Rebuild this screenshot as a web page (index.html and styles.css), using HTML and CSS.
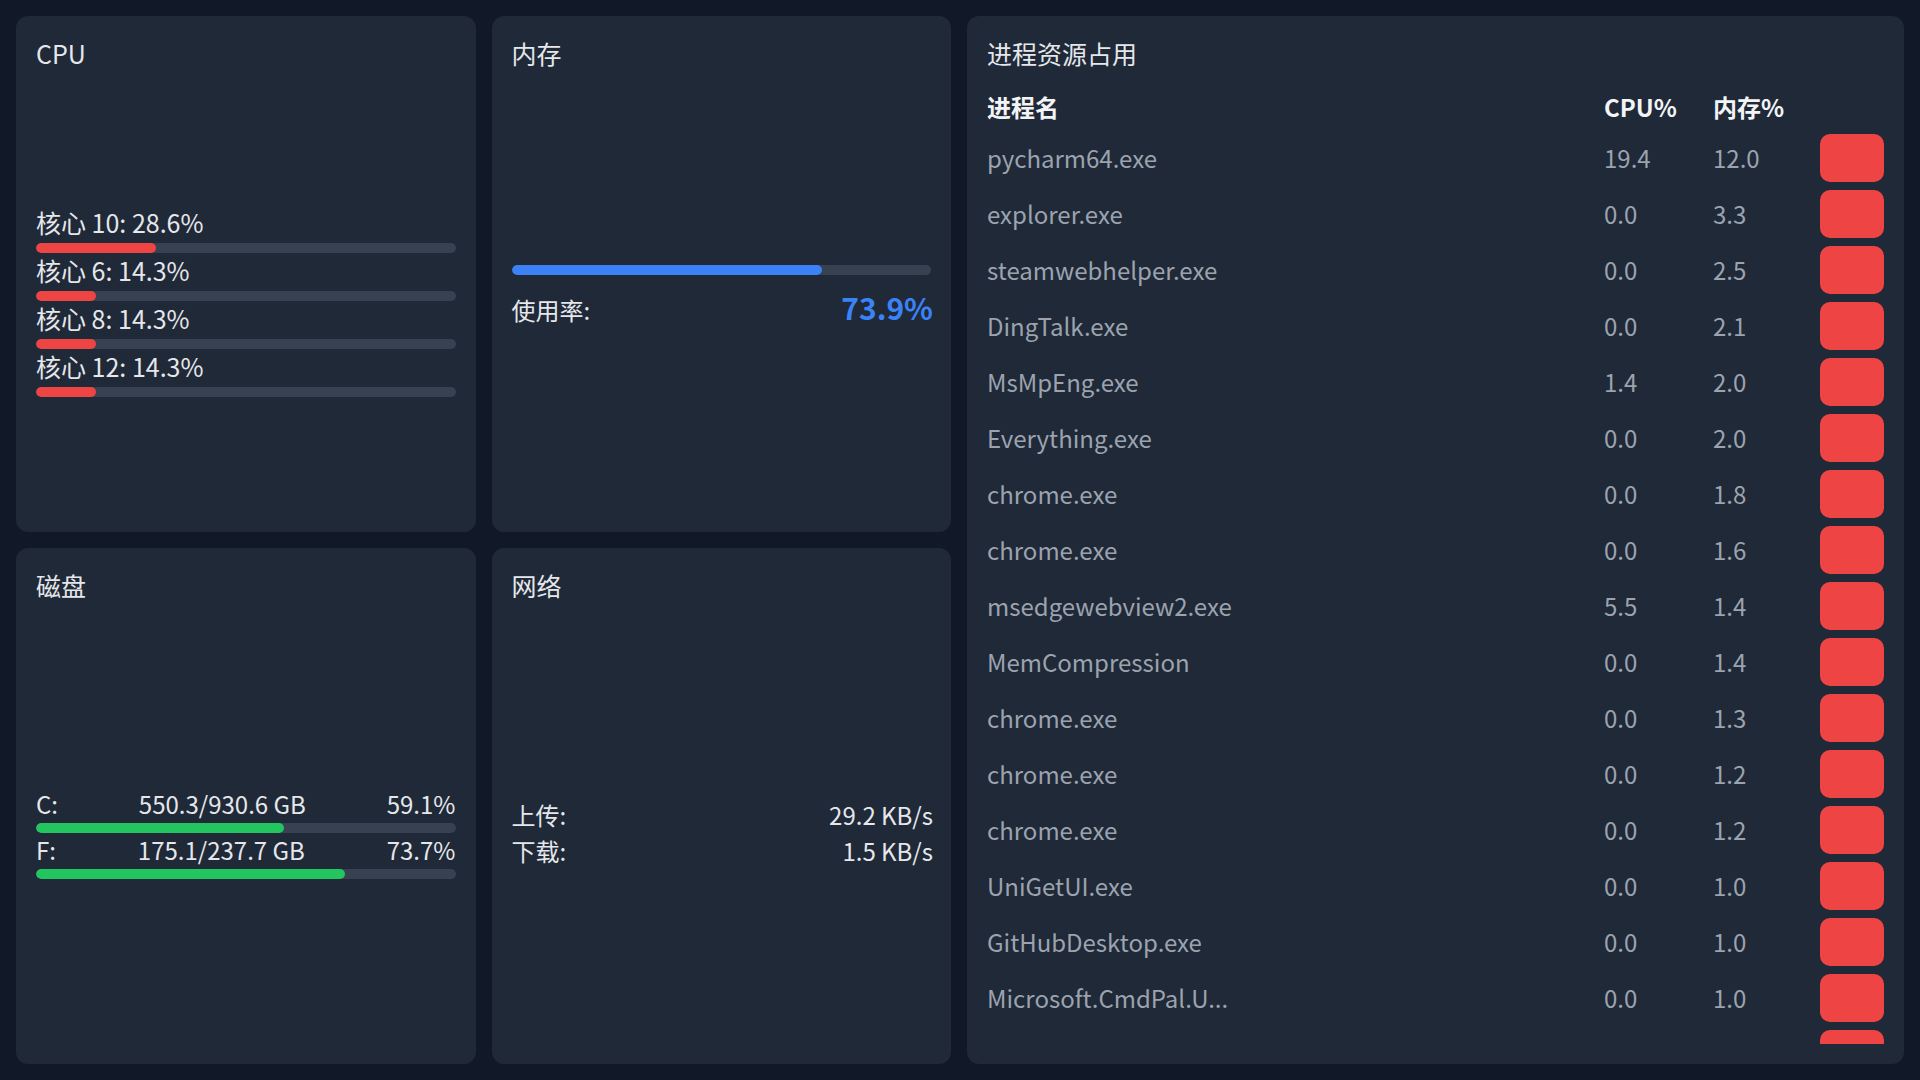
FILE: index.html
```html
<!DOCTYPE html>
<html lang="zh-CN">
<head>
<meta charset="utf-8">
<title>系统监控</title>
<link rel="stylesheet" href="styles.css">
</head>
<body>
<div class="dash">
  <section class="card cpu">
    <div class="title">CPU</div>
    <div class="body">
      <div class="core">
        <div class="label">核心 10: 28.6%</div>
        <div class="bar"><div class="fill red" style="width:28.6%"></div></div>
      </div>
      <div class="core">
        <div class="label">核心 6: 14.3%</div>
        <div class="bar"><div class="fill red" style="width:14.3%"></div></div>
      </div>
      <div class="core">
        <div class="label">核心 8: 14.3%</div>
        <div class="bar"><div class="fill red" style="width:14.3%"></div></div>
      </div>
      <div class="core">
        <div class="label">核心 12: 14.3%</div>
        <div class="bar"><div class="fill red" style="width:14.3%"></div></div>
      </div>
    </div>
  </section>

  <section class="card mem">
    <div class="title">内存</div>
    <div class="body">
      <div class="bar"><div class="fill blue" style="width:73.9%"></div></div>
      <div class="mem-row">
        <span>使用率:</span>
        <span class="big">73.9%</span>
      </div>
    </div>
  </section>

  <section class="card proc">
    <div class="title">进程资源占用</div>
    <div class="table">
      <div class="thead">
        <div>进程名</div><div>CPU%</div><div>内存%</div><div></div>
      </div>
      <div class="rows">
        <div class="tr"><div>pycharm64.exe</div><div>19.4</div><div>12.0</div><div class="kill"></div></div>
        <div class="tr"><div>explorer.exe</div><div>0.0</div><div>3.3</div><div class="kill"></div></div>
        <div class="tr"><div>steamwebhelper.exe</div><div>0.0</div><div>2.5</div><div class="kill"></div></div>
        <div class="tr"><div>DingTalk.exe</div><div>0.0</div><div>2.1</div><div class="kill"></div></div>
        <div class="tr"><div>MsMpEng.exe</div><div>1.4</div><div>2.0</div><div class="kill"></div></div>
        <div class="tr"><div>Everything.exe</div><div>0.0</div><div>2.0</div><div class="kill"></div></div>
        <div class="tr"><div>chrome.exe</div><div>0.0</div><div>1.8</div><div class="kill"></div></div>
        <div class="tr"><div>chrome.exe</div><div>0.0</div><div>1.6</div><div class="kill"></div></div>
        <div class="tr"><div>msedgewebview2.exe</div><div>5.5</div><div>1.4</div><div class="kill"></div></div>
        <div class="tr"><div>MemCompression</div><div>0.0</div><div>1.4</div><div class="kill"></div></div>
        <div class="tr"><div>chrome.exe</div><div>0.0</div><div>1.3</div><div class="kill"></div></div>
        <div class="tr"><div>chrome.exe</div><div>0.0</div><div>1.2</div><div class="kill"></div></div>
        <div class="tr"><div>chrome.exe</div><div>0.0</div><div>1.2</div><div class="kill"></div></div>
        <div class="tr"><div>UniGetUI.exe</div><div>0.0</div><div>1.0</div><div class="kill"></div></div>
        <div class="tr"><div>GitHubDesktop.exe</div><div>0.0</div><div>1.0</div><div class="kill"></div></div>
        <div class="tr"><div>Microsoft.CmdPal.U...</div><div>0.0</div><div>1.0</div><div class="kill"></div></div>
        <div class="tr"><div></div><div></div><div></div><div class="kill"></div></div>
      </div>
    </div>
  </section>

  <section class="card disk">
    <div class="title">磁盘</div>
    <div class="body">
      <div class="drive">
        <div class="drive-row"><span>C:</span><span>550.3/930.6 GB</span><span>59.1%</span></div>
        <div class="bar"><div class="fill green" style="width:59.1%"></div></div>
      </div>
      <div class="drive">
        <div class="drive-row"><span>F:</span><span>175.1/237.7 GB</span><span>73.7%</span></div>
        <div class="bar"><div class="fill green" style="width:73.7%"></div></div>
      </div>
    </div>
  </section>

  <section class="card net">
    <div class="title">网络</div>
    <div class="body">
      <div class="net-row"><span>上传:</span><span>29.2 KB/s</span></div>
      <div class="net-row"><span>下载:</span><span>1.5 KB/s</span></div>
    </div>
  </section>
</div>
</body>
</html>
```

FILE: styles.css
```css
* { box-sizing: border-box; }

html, body {
  margin: 0;
  padding: 0;
  height: 100%;
  background: #111827;
}

body {
  font-family: "Noto Sans CJK SC", "Noto Sans", sans-serif;
  font-size: 25px;
  color: #e5e7eb;
  overflow: hidden;
}

.dash {
  height: 1080px;
  padding: 16px;
  display: grid;
  grid-template-columns: 459.5px 459.5px 1fr;
  grid-template-rows: 1fr 1fr;
  gap: 16px;
}

.card {
  background: #1f2937;
  border-radius: 12px;
  padding: 20px;
  display: flex;
  flex-direction: column;
  min-height: 0;
  overflow: hidden;
}

.cpu { grid-column: 1; grid-row: 1; }
.mem { grid-column: 2; grid-row: 1; }
.proc { grid-column: 3; grid-row: 1 / span 2; }
.disk { grid-column: 1; grid-row: 2; }
.net { grid-column: 2; grid-row: 2; }

.title {
  font-size: 25px;
  line-height: 34px;
  color: #e5e7eb;
  margin-bottom: 19px;
}

.body {
  flex: 1;
  display: flex;
  flex-direction: column;
  justify-content: center;
}

.bar {
  height: 10px;
  border-radius: 5px;
  background: #374151;
  overflow: hidden;
}

.fill {
  height: 100%;
  border-radius: 5px;
}

.red { background: #ef4444; }
.blue { background: #3b82f6; }
.green { background: #22c55e; }

/* CPU */
.core .label {
  line-height: 34px;
}
.core .bar {
  margin-top: 4px;
}

/* Memory */
.mem-row {
  margin-top: 6px;
  line-height: 52px;
  font-size: 24px;
  display: flex;
  justify-content: space-between;
  align-items: baseline;
}
.mem-row .big {
  font-size: 30px;
  font-weight: 600;
  color: #3b82f6;
  margin-right: -2px;
}

/* Disk */
.drive-row {
  font-size: 24px;
  line-height: 34px;
  display: flex;
  justify-content: space-between;
}
.drive .bar {
  margin-top: 2px;
}

/* Network */
.net-row {
  font-size: 24px;
  line-height: 36px;
  display: flex;
  justify-content: space-between;
}
.net-row span:last-child {
  margin-right: -2px;
}

/* Processes */
.table {
  flex: 1;
  min-height: 0;
  display: flex;
  flex-direction: column;
  overflow: hidden;
  font-size: 24px;
}

.thead, .tr {
  display: grid;
  grid-template-columns: 1fr 109px 107px 64px;
  align-items: center;
}

.thead {
  font-weight: 700;
  color: #f3f4f6;
  line-height: 36px;
  padding-bottom: 5px;
}

.rows {
  flex: 1;
  min-height: 0;
  overflow: hidden;
}

.tr {
  height: 56px;
  padding: 4px 0;
  color: #9ca3af;
  line-height: 36px;
}

.kill {
  width: 64px;
  height: 48px;
  border-radius: 10px;
  background: #ef4444;
}
```
